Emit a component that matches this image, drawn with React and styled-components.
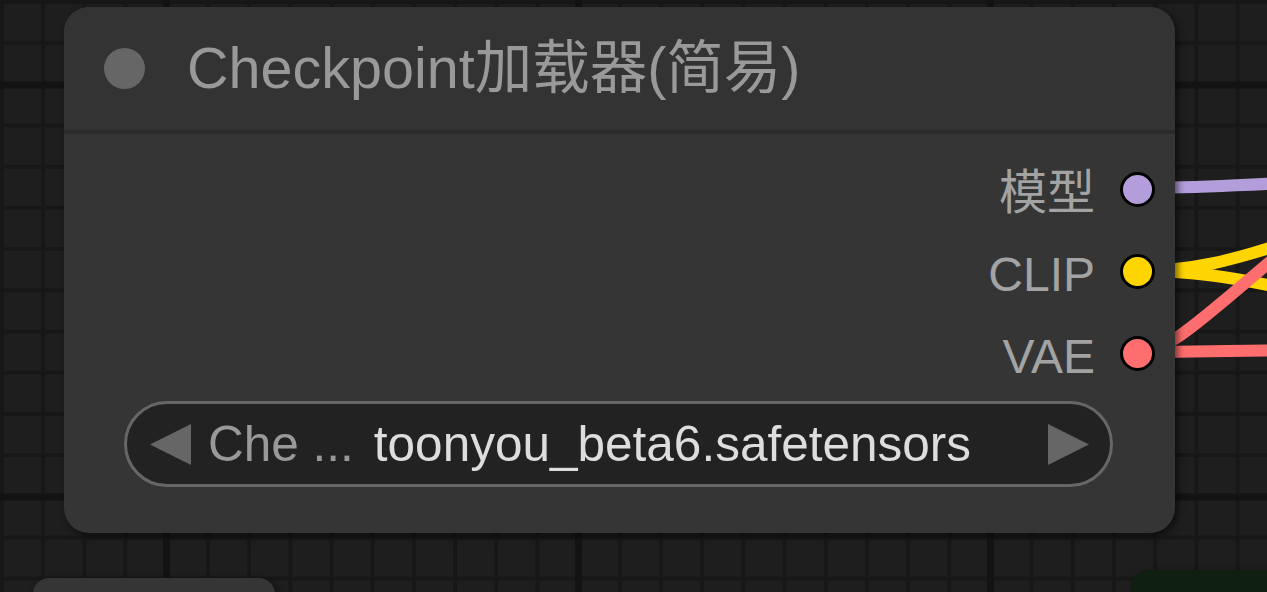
import React from 'react';
import styled, { createGlobalStyle } from 'styled-components';

const GlobalStyle = createGlobalStyle`
  html, body {
    margin: 0;
    padding: 0;
    background: #1e1e1e;
    overflow: hidden;
  }
  body {
    font-family: "Liberation Sans", Arial, "Noto Sans CJK SC", sans-serif;
  }
`;

const Canvas = styled.div`
  position: relative;
  width: 1267px;
  height: 592px;
  overflow: hidden;
  background-color: #1e1e1e;
  background-image:
    linear-gradient(to right, #131313 0 7px, transparent 7px),
    linear-gradient(to bottom, #131313 0 7px, transparent 7px),
    linear-gradient(to right, #171717 0 3.5px, transparent 3.5px),
    linear-gradient(to bottom, #171717 0 3.5px, transparent 3.5px);
  background-size: 412px 412px, 412px 412px, 41.2px 41.2px, 41.2px 41.2px;
  background-position: 163px 0, 0 81.5px, 0 0, 0 0;
`;

const Wires = styled.svg`
  position: absolute;
  inset: 0;
  width: 100%;
  height: 100%;
  z-index: 0;
`;

const Node = styled.div`
  position: absolute;
  left: ${p => p.$x}px;
  top: ${p => p.$y}px;
  width: ${p => p.$w}px;
  height: ${p => p.$h}px;
  z-index: 1;
  display: flex;
  flex-direction: column;
  background: ${p => p.$bg || '#353535'};
  border-radius: ${p => p.$r || 25}px;
  box-shadow: 3px 3px 7px rgba(0, 0, 0, 0.55);
  overflow: hidden;
`;

const Header = styled.div`
  height: 123px;
  display: flex;
  align-items: center;
  gap: 42px;
  padding-left: 40px;
  background: #333333;
  border-bottom: 4px solid #2b2b2b;
  flex-shrink: 0;
`;

const TitleDot = styled.span`
  width: 41px;
  height: 41px;
  border-radius: 50%;
  background: #666666;
  flex-shrink: 0;
`;

const Title = styled.span`
  font-size: 57.5px;
  line-height: 1;
  color: #999999;
  white-space: nowrap;
`;

const Body = styled.div`
  flex: 1;
  display: flex;
  flex-direction: column;
  padding: 14px 20px 0 60px;
`;

const Outputs = styled.div`
  display: flex;
  flex-direction: column;
`;

const SlotRow = styled.div`
  height: 82px;
  display: flex;
  justify-content: flex-end;
  align-items: center;
  gap: 25px;
`;

const SlotLabel = styled.span`
  font-size: 48px;
  line-height: 1;
  margin-top: 8px;
  color: #a3a3a3;
  white-space: nowrap;
`;

const SlotDot = styled.span`
  box-sizing: border-box;
  width: 35px;
  height: 35px;
  border-radius: 50%;
  background: ${p => p.$color};
  border: 3.5px solid #000;
  flex-shrink: 0;
`;

const Combo = styled.div`
  box-sizing: border-box;
  margin-top: 7px;
  margin-right: 42px;
  height: 86px;
  display: flex;
  align-items: center;
  padding: 0 21px 0 23px;
  border: 3.5px solid #666666;
  border-radius: 43px;
  background: #222222;
  font-size: 49.5px;
  line-height: 1;
  white-space: nowrap;
`;

const Arrow = styled.svg`
  width: 41px;
  height: 41px;
  flex-shrink: 0;
`;

const ComboLabel = styled.span`
  color: #999999;
  margin-left: 17px;
`;

const ComboValue = styled.span`
  color: #dddddd;
  margin-left: 20px;
  flex: 1;
`;

const links = [
  { d: 'M1137 188 C1200 188 1230 185 1290 183', c: '#b39ddb' },
  { d: 'M1137 271 C1190 271 1230 262 1300 238', c: '#ffd500' },
  { d: 'M1137 271 C1190 271 1230 276 1300 292', c: '#ffd500' },
  { d: 'M1137 352 C1200 352 1240 351 1300 350', c: '#ff6e6e' },
  { d: 'M1137 352 C1170 352 1200 320 1290 245', c: '#ff6e6e' },
];

const outputs = [
  { label: '模型', color: '#b39ddb' },
  { label: 'CLIP', color: '#ffd500' },
  { label: 'VAE', color: '#ff6e6e' },
];

export default function App() {
  return (
    <>
      <GlobalStyle />
      <Canvas>
        <Wires viewBox="0 0 1267 592">
          {links.map((l, i) => (
            <path key={i} d={l.d} stroke={l.c} strokeWidth="12" fill="none" />
          ))}
        </Wires>

        <Node $x={64} $y={7} $w={1111} $h={526}>
          <Header>
            <TitleDot />
            <Title>Checkpoint加载器(简易)</Title>
          </Header>
          <Body>
            <Outputs>
              {outputs.map(o => (
                <SlotRow key={o.label}>
                  <SlotLabel>{o.label}</SlotLabel>
                  <SlotDot $color={o.color} />
                </SlotRow>
              ))}
            </Outputs>
            <Combo>
              <Arrow viewBox="0 0 41 41">
                <polygon points="41,0 41,41 0,20.5" fill="#666666" />
              </Arrow>
              <ComboLabel>Che ...</ComboLabel>
              <ComboValue>toonyou_beta6.safetensors</ComboValue>
              <Arrow viewBox="0 0 41 41">
                <polygon points="0,0 0,41 41,20.5" fill="#666666" />
              </Arrow>
            </Combo>
          </Body>
        </Node>

        <Node $x={33} $y={578} $w={242} $h={120} $r={16} />
        <Node $x={1131} $y={570} $w={200} $h={120} $r={18} $bg="#0f1f10" />
      </Canvas>
    </>
  );
}
